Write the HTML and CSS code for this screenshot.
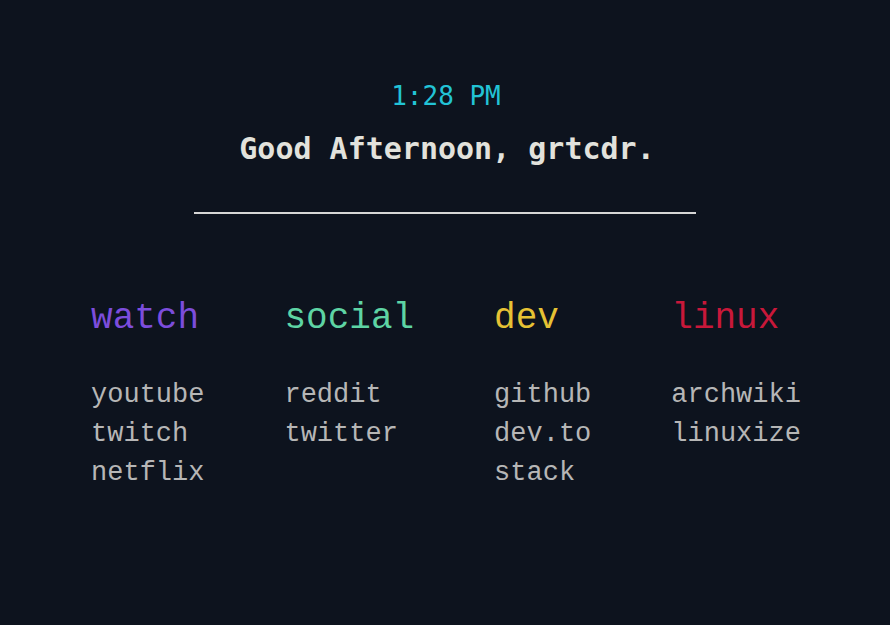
FILE: index.html
```html
<!DOCTYPE html>
<html lang="en">
<head>
<meta charset="utf-8">
<title>Start</title>
<link rel="stylesheet" href="styles.css">
</head>
<body>
<main class="page">
  <header class="head">
    <div class="clock">1:28 PM</div>
    <h1 class="greeting">Good Afternoon, grtcdr.</h1>
    <hr class="divider">
  </header>
  <section class="groups">
    <div class="group">
      <h2 class="title watch">watch</h2>
      <ul class="links">
        <li><a href="#">youtube</a></li>
        <li><a href="#">twitch</a></li>
        <li><a href="#">netflix</a></li>
      </ul>
    </div>
    <div class="group">
      <h2 class="title social">social</h2>
      <ul class="links">
        <li><a href="#">reddit</a></li>
        <li><a href="#">twitter</a></li>
      </ul>
    </div>
    <div class="group">
      <h2 class="title dev">dev</h2>
      <ul class="links">
        <li><a href="#">github</a></li>
        <li><a href="#">dev.to</a></li>
        <li><a href="#">stack</a></li>
      </ul>
    </div>
    <div class="group">
      <h2 class="title linux">linux</h2>
      <ul class="links">
        <li><a href="#">archwiki</a></li>
        <li><a href="#">linuxize</a></li>
      </ul>
    </div>
  </section>
</main>
</body>
</html>
```
FILE: styles.css
```css
html, body {
  margin: 0;
  padding: 0;
  background: #0d131e;
  height: 100%;
}
body {
  font-family: "DejaVu Sans Mono", "Liberation Mono", monospace;
  color: #b6b6b6;
}
.page {
  display: flex;
  flex-direction: column;
  padding-top: 81px;
}
.head {
  display: flex;
  flex-direction: column;
  align-items: center;
}
.clock {
  font-size: 26px;
  line-height: 30px;
  color: #22c3d6;
  padding-left: 2px;
}
.greeting {
  margin: 20px 0 0;
  font-size: 30px;
  line-height: 36px;
  font-weight: bold;
  color: #e2e2dc;
  padding-left: 4px;
}
.divider {
  margin: 45px 0 0;
  width: 502px;
  height: 0;
  border: 0;
  border-top: 2px solid #d6d6d6;
}
.groups {
  display: flex;
  justify-content: center;
  gap: 80px;
  margin-top: 83px;
  padding-left: 2px;
}
.group {
  display: flex;
  flex-direction: column;
}
.title {
  margin: 0;
  font-family: "Liberation Mono", "DejaVu Sans Mono", monospace;
  font-size: 36px;
  line-height: 44px;
  font-weight: normal;
}
.watch { color: #7c4ddc; }
.social { color: #5ed4a4; }
.dev { color: #e6c234; }
.linux { color: #c8183a; }
.links {
  list-style: none;
  margin: 35px 0 0;
  padding: 0;
}
.links li {
  font-family: "Liberation Mono", "DejaVu Sans Mono", monospace;
  font-size: 27px;
  line-height: 39px;
}
.links a {
  color: #b6b6b6;
  text-decoration: none;
}
```
